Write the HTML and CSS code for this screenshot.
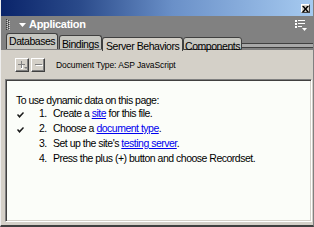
FILE: index.html
```html
<!DOCTYPE html>
<html>
<head>
<meta charset="utf-8">
<link rel="stylesheet" href="styles.css">
</head>
<body>
<div class="win">
  <div class="title">
    <span class="close"><svg width="7" height="6" viewBox="0 0 7 6"><path d="M0 0h2l1.5 2 1.5-2h2l-2.5 3 2.5 3h-2l-1.5-2-1.5 2h-2l2.5-3z" fill="#000"/></svg></span>
  </div>
  <div class="head">
    <div class="headrow">
      <svg class="grip" width="6" height="11" viewBox="0 0 6 11">
        <g fill="#3a3a3a"><rect x="0" y="0" width="1" height="1"/><rect x="2" y="1" width="1" height="1"/><rect x="0" y="2" width="1" height="1"/><rect x="2" y="3" width="1" height="1"/><rect x="0" y="4" width="1" height="1"/><rect x="2" y="5" width="1" height="1"/><rect x="0" y="6" width="1" height="1"/><rect x="2" y="7" width="1" height="1"/><rect x="0" y="8" width="1" height="1"/><rect x="2" y="9" width="1" height="1"/><rect x="0" y="10" width="1" height="1"/></g>
        <g fill="#d8d8d8"><rect x="1" y="1" width="1" height="1"/><rect x="3" y="2" width="1" height="1"/><rect x="1" y="3" width="1" height="1"/><rect x="3" y="4" width="1" height="1"/><rect x="1" y="5" width="1" height="1"/><rect x="3" y="6" width="1" height="1"/><rect x="1" y="7" width="1" height="1"/><rect x="3" y="8" width="1" height="1"/><rect x="1" y="9" width="1" height="1"/><rect x="3" y="10" width="1" height="1"/></g>
      </svg>
      <svg class="tri" width="7" height="4" viewBox="0 0 7 4"><path d="M0 0h7l-3.5 4z" fill="#fff"/></svg>
      <span class="appname">Application</span>
      <svg class="opts" width="12" height="11" viewBox="0 0 12 11">
        <g fill="#fff">
          <rect x="0" y="0" width="2" height="2"/><rect x="3" y="0" width="7" height="1"/>
          <rect x="0" y="3" width="2" height="2"/><rect x="3" y="3" width="7" height="1"/>
          <rect x="0" y="6" width="2" height="2"/><rect x="3" y="6" width="4" height="1"/>
          <path d="M7 8h5l-2.5 3z"/>
        </g>
      </svg>
    </div>
    <div class="tabs">
      <div class="tab t1">Databases</div>
      <div class="tab t2">Bindings</div>
      <div class="tab active">Server Behaviors</div>
      <div class="tab t4">Components</div>
      <div class="tabline"></div>
    </div>
  </div>
  <div class="toolbar">
    <span class="tbtn">
      <svg width="11" height="10" viewBox="0 0 11 10">
        <path d="M4 1h1v3h3v1h-3v3h-1v-3h-3v-1h3z" fill="#808080"/>
        <path d="M5 5v3h-1v1h2v-4z" fill="#fff"/>
        <path d="M7 7h4l-2 2z" fill="#808080"/>
      </svg>
    </span>
    <span class="tbtn">
      <svg width="11" height="10" viewBox="0 0 11 10">
        <rect x="2" y="4" width="7" height="1" fill="#808080"/>
        <rect x="3" y="5" width="7" height="1" fill="#fff"/>
      </svg>
    </span>
    <span class="doctype">Document Type: ASP JavaScript</span>
  </div>
  <div class="content">
    <p class="intro">To use dynamic data on this page:</p>
    <ol class="steps">
      <li class="step"><span class="chk"><svg width="7" height="6" viewBox="0 0 7 6"><path d="M0 3l1-1 1.5 1.5L6 0l1 1-4.5 5z" fill="#1a1a1a"/></svg></span><span class="num">1.</span><span class="txt">Create a <a class="lnk">site</a> for this file.</span></li>
      <li class="step"><span class="chk"><svg width="7" height="6" viewBox="0 0 7 6"><path d="M0 3l1-1 1.5 1.5L6 0l1 1-4.5 5z" fill="#1a1a1a"/></svg></span><span class="num">2.</span><span class="txt">Choose a <a class="lnk">document type</a>.</span></li>
      <li class="step"><span class="chk"></span><span class="num">3.</span><span class="txt">Set up the site's <a class="lnk">testing server</a>.</span></li>
      <li class="step"><span class="chk"></span><span class="num">4.</span><span class="txt">Press the plus (+) button and choose Recordset.</span></li>
    </ol>
  </div>
</div>
</body>
</html>
```

FILE: styles.css
```css
html, body {
  margin: 0;
  padding: 0;
  background: #d4d0c8;
}
.win {
  width: 314px;
  height: 227px;
  box-sizing: border-box;
  display: flex;
  flex-direction: column;
  background: #d4d0c8;
  border-left: 1px solid #eeeeee;
  border-right: 1px solid #808080;
  border-bottom: 2px solid #404040;
  font-family: "Liberation Sans", Arial, sans-serif;
}
.title {
  height: 16px;
  flex: none;
  display: flex;
  align-items: center;
  justify-content: flex-end;
  padding-right: 3px;
  background: linear-gradient(90deg, #0a246a 0%, #2a4a8a 25%, #6a90c8 55%, #a6caf0 100%);
}
.close {
  width: 9px;
  height: 9px;
  box-sizing: border-box;
  margin-top: 1px;
  background: #d4d0c8;
  border-top: 1px solid #ffffff;
  border-left: 1px solid #ffffff;
  border-right: 1px solid #404040;
  border-bottom: 1px solid #404040;
  display: flex;
  align-items: center;
  justify-content: center;
}
.close svg { display: block; }
.head {
  height: 34px;
  flex: none;
  background: #818181;
  display: flex;
  flex-direction: column;
}
.headrow {
  height: 15px;
  display: flex;
  align-items: center;
  padding-left: 5px;
  padding-right: 6px;
}
.grip { display: block; margin-top: 2px; }
.tri { display: block; margin-left: 7px; margin-top: 2px; }
.appname {
  margin-left: 3px;
  margin-top: 1px;
  color: #ffffff;
  font-weight: bold;
  font-size: 11px;
  letter-spacing: -0.3px;
  line-height: 12px;
  flex: 1;
}
.opts { display: block; margin-top: 4px; }
.tabs {
  height: 19px;
  display: flex;
  align-items: flex-end;
  padding-left: 5px;
}
.tab {
  box-sizing: border-box;
  font-size: 10.5px;
  letter-spacing: -0.45px;
  line-height: 12px;
  color: #000;
  white-space: nowrap;
  background: #c6c6c0;
  border: 1px solid #404040;
  border-radius: 3px 3px 0 0;
  padding: 2px 0 0 2px;
}
.t1 { width: 52px; height: 16px; margin-bottom: 1px; padding-top: 1px; border-bottom: none; }
.t2 { width: 43px; height: 14px; margin-bottom: 1px; margin-left: 1px; border-bottom: none; }
.active {
  width: 81px;
  height: 14px;
  margin-bottom: -1px;
  background: #d4d0c8;
  border-color: #404040;
  border-bottom: none;
  padding-left: 3px;
}
.t4 { width: 59px; height: 13px; padding-left: 1px; }
.tabline {
  flex: 1;
  height: 5px;
  box-sizing: border-box;
  margin-bottom: 2px;
  border-top: 1px solid #404040;
  border-bottom: 1px solid #404040;
  background: #a8a8a8;
}
.toolbar {
  height: 29px;
  flex: none;
  box-sizing: border-box;
  display: flex;
  align-items: flex-start;
  padding: 8px 0 0 14px;
}
.tbtn {
  width: 14px;
  height: 14px;
  box-sizing: border-box;
  border-top: 1px solid #ffffff;
  border-left: 1px solid #ffffff;
  border-right: 1px solid #404040;
  border-bottom: 1px solid #404040;
  box-shadow: inset -1px -1px 0 #808080;
  display: flex;
  align-items: center;
  justify-content: center;
  margin-right: 2px;
}
.tbtn svg { display: block; }
.doctype {
  margin-left: 9px;
  font-size: 8.5px;
  letter-spacing: -0.1px;
  line-height: 14px;
  color: #000;
}
.content {
  flex: 1;
  margin: 0 1px 3px 4px;
  box-sizing: border-box;
  background: #fbfdf9;
  border-top: 1px solid #808080;
  border-left: 1px solid #808080;
  border-right: 1px solid #ffffff;
  border-bottom: 1px solid #ffffff;
  box-shadow: inset 1px 1px 0 #404040, inset -1px -1px 0 #d4d0c8;
  padding: 14px 0 0 10px;
  font-size: 10.5px;
  letter-spacing: -0.5px;
  color: #000;
}
.intro {
  margin: 0;
  line-height: 12px;
}
.steps {
  list-style: none;
  margin: 0;
  padding: 0;
}
.step {
  display: flex;
  line-height: 15px;
}
.chk {
  width: 23px;
  display: flex;
  align-items: center;
  padding-left: 1px;
  box-sizing: border-box;
}
.chk svg { display: block; margin-top: 2px; }
.num { width: 14px; }
.lnk {
  color: #0000ee;
  text-decoration: underline;
}
```
